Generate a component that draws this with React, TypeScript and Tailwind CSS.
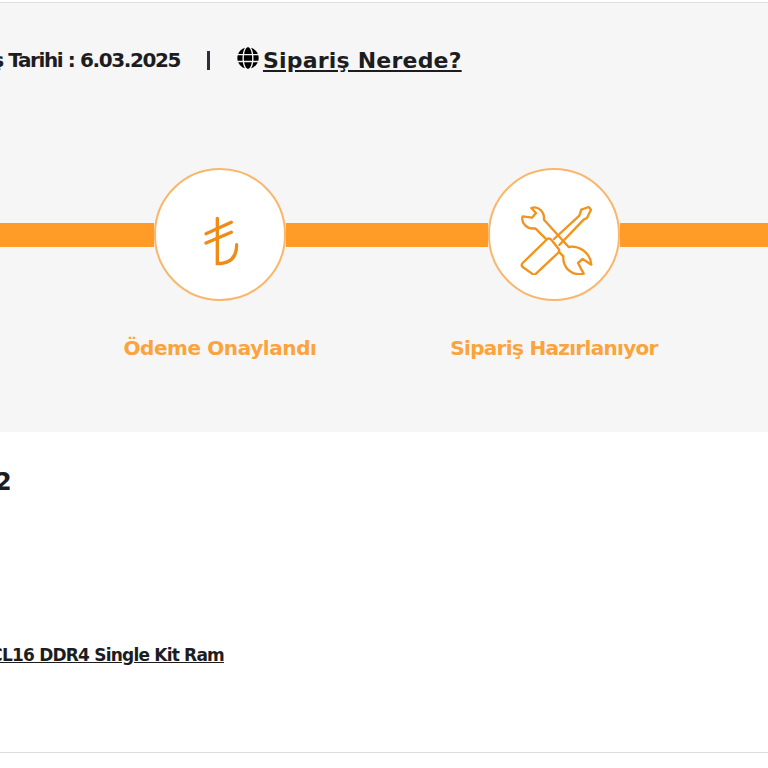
import { FaGlobe } from 'react-icons/fa'

const font = { fontFamily: '"DejaVu Sans", sans-serif' }

const LiraIcon = () => (
  <svg width="80" height="80" viewBox="120 116 240 240" fill="none" stroke="#EE8C16" strokeWidth="10" strokeLinecap="round">
    <path d="M232 186 V322 C268 322 290 305 290 265" />
    <path d="M198 232 L274 198" />
    <path d="M198 260 L274 228" />
  </svg>
)

const ToolsIcon = () => (
  <svg width="80" height="80" viewBox="116 116 240 240" fill="none" stroke="#F0931F" strokeWidth="7" strokeLinejoin="round" strokeLinecap="round">
    <path d="M168 155 C188 148 208 165 206 190 L280 272 C305 266 345 285 348 325 L322 308 L308 320 L325 352 C290 360 262 335 264 300 L180 216 C155 220 136 200 142 180 L170 184 L182 170 Z" />
    <path fill="#fff" d="M142 320 L216 248 Q222 244 228 250 L250 278 Q254 284 248 290 L182 352 Q176 358 170 352 L142 332 Q136 326 142 320 Z" />
    <path d="M236 248 L312 178 L318 160 L340 152 L347 160 L335 185 L325 190 L252 266" />
  </svg>
)

const App = () => {
  return (
    <div className="w-[768px] h-[768px] overflow-hidden bg-white pt-[2px] text-[#1d1d1f]" style={font}>
      {/* Order status panel */}
      <div className="h-[430px] border-t border-[#dddddd] bg-[#f6f6f6] pt-[44px]">
        <div className="flex h-[26px] items-center whitespace-nowrap">
          <div className="flex w-[180px] justify-end text-[20px] font-bold tracking-[-1.4px]">
            <span>Sipariş Tarihi : 6.03.2025</span>
          </div>
          <span className="ml-[27px] mr-[27px] h-[19px] w-[3px] bg-[#2b2f36]" />
          <a className="flex items-center text-[22px] font-bold tracking-[0.2px]">
            <FaGlobe className="mr-[4px] h-[22px] w-[22px] -translate-y-[2px] text-black" />
            <span className="underline">Sipariş Nerede?</span>
          </a>
        </div>

        {/* Progress line */}
        <div className="mt-[95px] flex h-[133px] items-center">
          <div className="h-[24px] w-[154px] bg-[#ff9b26]" />
          <div className="flex h-[133px] w-[132px] shrink-0 items-center justify-center rounded-full border-2 border-[#fab66a] bg-white">
            <LiraIcon />
          </div>
          <div className="h-[24px] w-[202px] bg-[#ff9b26]" />
          <div className="flex h-[133px] w-[132px] shrink-0 items-center justify-center rounded-full border-2 border-[#fab66a] bg-white">
            <ToolsIcon />
          </div>
          <div className="h-[24px] flex-1 bg-[#ff9b26]" />
        </div>

        <div className="mt-[32px] ml-[53px] flex text-[20px] font-bold text-[#fba33c]">
          <div className="w-[334px] text-center tracking-[-0.4px]">Ödeme Onaylandı</div>
          <div className="w-[334px] text-center tracking-[-0.7px]">Sipariş Hazırlanıyor</div>
        </div>
      </div>

      {/* Product section */}
      <div className="h-[321px] border-b border-[#dddddd] pt-[36px]">
        <div className="-ml-[5px] text-[24px] leading-[28px] font-bold">2</div>
        <div className="mt-[147px] flex w-[224px] justify-end text-[17px] font-bold tracking-[-0.8px] whitespace-nowrap underline">
          <span>3200MHz CL16 DDR4 Single Kit Ram</span>
        </div>
      </div>
    </div>
  )
}

export default App
